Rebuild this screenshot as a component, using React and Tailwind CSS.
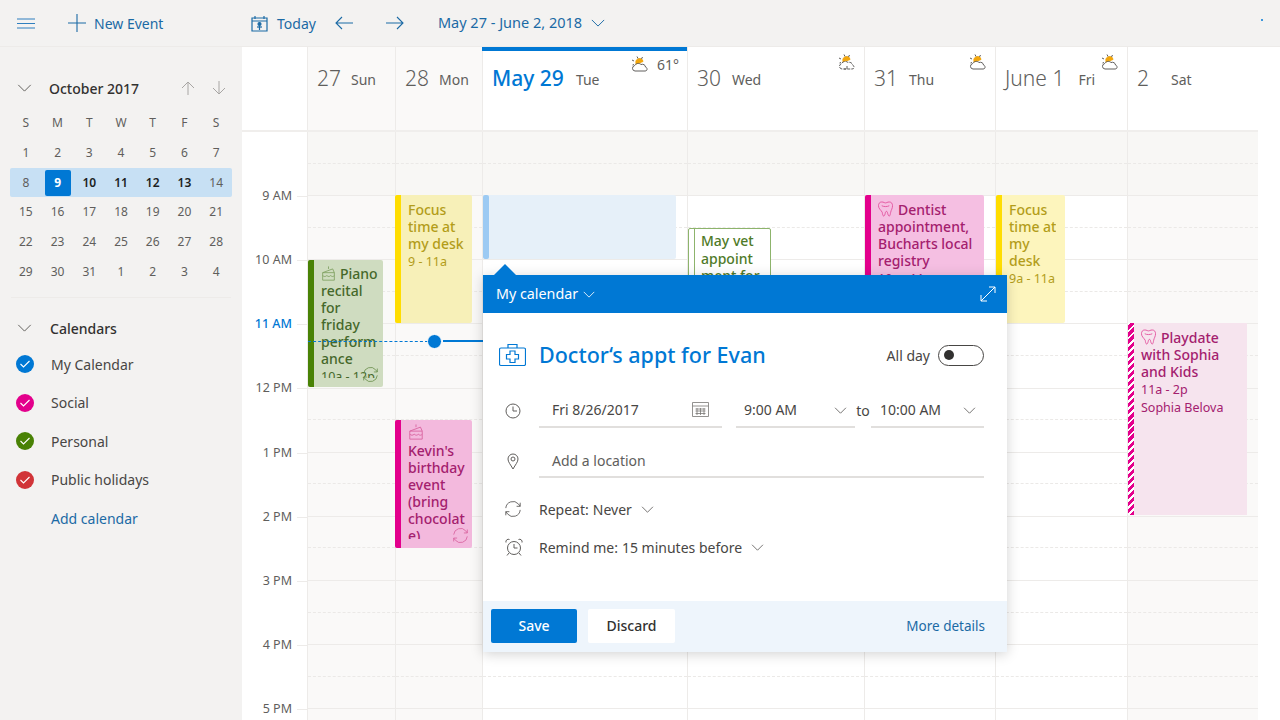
import React from 'react';

const Chevron = ({ className = '', color = '#605e5c' }) => (
  <svg viewBox="0 0 16 9" className={className} fill="none" stroke={color} strokeWidth="1.1">
    <path d="M1 1l7 7 7-7" />
  </svg>
);

const Sync = ({ className = '', color }) => (
  <svg viewBox="0 0 20 20" className={className} fill="none" stroke={color} strokeWidth="1">
    <path d="M2 9a8 8 0 0 1 14-4.6L18 7M18 3v4h-4" />
    <path d="M18 11a8 8 0 0 1-14 4.6L2 13M2 17v-4h4" />
  </svg>
);

const Cake = ({ className = '', color }) => (
  <svg viewBox="0 0 18 18" className={className} fill="none" stroke={color} strokeWidth="1">
    <path d="M9 .5v3M2 8l12-4.5 2 4.5M2 8h14v9H2zM2 11.5c2 1.5 3 1.5 5 0 2 1.5 3 1.5 4.500 0 2 1.500 3 1.500 4.500 0" />
  </svg>
);

const Tooth = ({ className = '', color }) => (
  <svg viewBox="0 0 16 17" className={className} fill="none" stroke={color} strokeWidth="1">
    <path d="M4 1c2 0 3 1 4 1s2-1 4-1c2.500 0 3.500 2 3.500 4 0 3-1.500 4.500-2 7-.3 1.500-.5 4-1.500 4s-1.500-2-2-4c-.3-1.300-1.500-1.300-2 0-.5 2-1 4-2 4s-1.200-2.500-1.500-4C3 9.500.5 8 .5 5 .5 3 1.500 1 4 1z" />
    <path d="M4 5c2 1.200 6 1.200 8 0" />
  </svg>
);

const Weather = ({ rain = false }) => (
  <svg viewBox="0 0 18 17" className="w-[18px] h-[17px]" fill="none" strokeWidth="1">
    <path d="M5 7a3.500 3.500 0 0 1 7-1.500L5 8z" fill="#f2a60c" stroke="#f2a60c" />
    <path d="M6 .5l1 2M1 4l2 1M11.500 1l-1 2M1.500 9L3 8.500" stroke="#605e5c" />
    <path d="M4 15a2.700 2.700 0 0 1-.5-5.300C4.500 7.500 8 6.500 10 8.500c2-.8 4.500.5 4.500 2.500 1.800.3 2.500 4-.5 4z" stroke="#605e5c" fill={rain ? '#ffffff' : 'none'} strokeDasharray={rain ? '3 1' : undefined} />
    {rain && <path d="M9 12v3M7 14v2" stroke="#605e5c" />}
  </svg>
);

const TopBar = () => (
  <div className="h-[47px] flex items-center border-b border-[#edebe9] relative text-[14px] text-[#1b6aa5]">
    <svg viewBox="0 0 18 11" className="w-[18px] h-[11px] ml-[17px]" stroke="#2f7fbf" strokeWidth="1">
      <path d="M0 1h18M0 5.500h18M0 10h18" />
    </svg>
    <svg viewBox="0 0 18 18" className="w-[18px] h-[18px] ml-[33px]" stroke="#1b6aa5" strokeWidth="1.100">
      <path d="M0 9h18M9 0v18" />
    </svg>
    <span className="ml-[8px] w-[157px] mt-[1px]">New Event</span>
    <svg viewBox="0 0 17 17" className="w-[17px] h-[17px]" fill="none" stroke="#1b6aa5" strokeWidth="1.200">
      <path d="M1 3h15v13H1zM1 6h15M4 1v3M13 1v3M8.500 11v4" />
      <circle cx="8.500" cy="9" r="1.500" fill="#1b6aa5" />
      <path d="M6 12h5" />
    </svg>
    <span className="ml-[9px] mt-[1px]">Today</span>
    <svg viewBox="0 0 18 14" className="w-[18px] h-[14px] ml-[19px]" fill="none" stroke="#1b6aa5" strokeWidth="1.100">
      <path d="M18 7H1M7 1L1 7l6 6" />
    </svg>
    <svg viewBox="0 0 18 14" className="w-[18px] h-[14px] ml-[33px]" fill="none" stroke="#1b6aa5" strokeWidth="1.100">
      <path d="M0 7h17M11 1l6 6-6 6" />
    </svg>
    <span className="ml-[34px] text-[14.500px]">May 27 - June 2, 2018</span>
    <Chevron className="w-[14px] h-[8px] ml-[9px]" color="#1b6aa5" />
    <div className="absolute right-[17px] top-[19px] w-[2px] h-[2px] rounded-full bg-[#0078d4]" />
  </div>
);

const weekdays = ['S', 'M', 'T', 'W', 'T', 'F', 'S'];
const weeks = [
  [1, 2, 3, 4, 5, 6, 7],
  [8, 9, 10, 11, 12, 13, 14],
  [15, 16, 17, 18, 19, 20, 21],
  [22, 23, 24, 25, 26, 27, 28],
  [29, 30, 31, 1, 2, 3, 4],
];

const calendars = [
  { name: 'My Calendar', color: 'bg-[#0078d4]' },
  { name: 'Social', color: 'bg-[#e3008c]' },
  { name: 'Personal', color: 'bg-[#498205]' },
  { name: 'Public holidays', color: 'bg-[#d13438]' },
];

const Sidebar = () => (
  <div className="w-[242px] shrink-0 pt-[31px]">
    <div className="flex items-center h-[20px]">
      <Chevron className="w-[15px] h-[8px] ml-[17px]" />
      <span className="ml-[17px] text-[14px] font-medium text-[#323130]">October 2017</span>
      <svg viewBox="0 0 14 14" className="w-[14px] h-[14px] absolute left-[181px]" fill="none" stroke="#a8a6a4">
        <path d="M7 14V1M1 7l6-6 6 6" />
      </svg>
      <svg viewBox="0 0 14 14" className="w-[14px] h-[14px] absolute left-[212px]" fill="none" stroke="#a8a6a4">
        <path d="M7 0v13M1 7l6 6 6-6" />
      </svg>
    </div>
    <div className="mt-[10px] mx-[10px] grid grid-cols-7 text-[12px] text-[#605e5c]">
      {weekdays.map((d, i) => (
        <div key={i} className="h-[30px] flex items-center justify-center">{d}</div>
      ))}
    </div>
    <div className="mx-[10px] text-[12px] text-[#605e5c]">
      {weeks.map((w, i) => (
        <div key={i} className={i === 1 ? 'grid grid-cols-7 h-[29px] bg-[#c7e0f4] rounded-[2px]' : 'grid grid-cols-7 h-[30px]'}>
          {w.map((d, j) => (
            <div key={j} className="flex items-center justify-center">
              {d === 9 && i === 1 ? (
                <span className="w-[26px] h-[26px] flex items-center justify-center rounded-[2px] bg-[#0078d4] text-white font-bold">{d}</span>
              ) : (
                <span className={i === 1 && j > 1 && j < 6 ? 'font-semibold text-[#201f1e]' : ''}>{d}</span>
              )}
            </div>
          ))}
        </div>
      ))}
    </div>
    <div className="mt-[10px] mx-[11px] h-px bg-[#edebe9]" />
    <div className="mt-[20px] flex items-center h-[20px]">
      <Chevron className="w-[15px] h-[8px] ml-[17px]" />
      <span className="ml-[18px] text-[14px] font-medium text-[#323130]">Calendars</span>
    </div>
    <div className="mt-[7px]">
      {calendars.map((c) => (
        <div key={c.name} className="h-[38.500px] flex items-center pl-[16px]">
          <span className={`w-[18px] h-[18px] rounded-full flex items-center justify-center ${c.color}`}>
            <svg viewBox="0 0 10 8" className="w-[10px] h-[8px]" fill="none" stroke="#ffffff" strokeWidth="1.100">
              <path d="M.5 4l3 3 6-6" />
            </svg>
          </span>
          <span className="ml-[17px] text-[14px] text-[#484644]">{c.name}</span>
        </div>
      ))}
      <div className="h-[38.500px] flex items-center pl-[51px] text-[14px] text-[#1b6aa5]">Add calendar</div>
    </div>
  </div>
);

const Event = ({ className, bar, lines, time, extra, textColor, indent = '', innerClass = 'pt-[6px]', children }) => (
  <div className={`absolute flex rounded-[2px] overflow-hidden ${className}`}>
    <div className={`w-[6px] shrink-0 ${bar}`} />
    <div className={`pl-[7px] text-[14px] leading-[17px] font-medium overflow-hidden ${textColor} ${innerClass}`}>
      {children}
      {lines.map((l, i) => (
        <div key={i} className={`whitespace-nowrap ${i === 0 ? indent : ''}`}>{l}</div>
      ))}
      {time && <div className="text-[12.500px] font-normal whitespace-nowrap mt-[1px]">{time}</div>}
      {extra && <div className="text-[12.500px] font-normal whitespace-nowrap mt-[1px]">{extra}</div>}
    </div>
  </div>
);

const Slots = () => (
  <>
    {Array.from({ length: 10 }).map((_, i) => (
      <div key={i} className={`h-[64.150px] border-b border-[#edebe9] ${i === 0 ? 'bg-[#f8f7f5]' : ''}`}>
        <div className="h-1/2 border-b border-dashed border-[#ebe9e7]" />
      </div>
    ))}
  </>
);

const hours = ['9 AM', '10 AM', '11 AM', '12 PM', '1 PM', '2 PM', '3 PM', '4 PM', '5 PM'];

const Header = ({ width, label, day, gap, today, weather, temp, rain, weekend }) => (
  <div className={`${width} shrink-0 h-[83px] relative border-l border-[#edebe9] flex items-baseline pt-[16px] pl-[9px] ${weekend ? 'bg-[#faf9f8]' : 'bg-white'} ${gap}`}>
    {today && <div className="absolute -left-px right-0 top-0 h-[4px] bg-[#0078d4]" />}
    <span className={today ? 'text-[21px] font-medium text-[#0078d4]' : 'text-[21px] font-light text-[#605e5c]'}>{label}</span>
    <span className="text-[14px] text-[#605e5c] relative -top-[1px]">{day}</span>
    {weather && (
      <div className="absolute right-[8px] top-[7px] flex items-center gap-[8px]">
        <Weather rain={rain} />
        {temp && <span className="text-[14px] text-[#605e5c]">{temp}</span>}
      </div>
    )}
  </div>
);

const Field = ({ className, children }) => (
  <div className={`h-[35px] border-b-2 border-[#e1dfdd] flex items-center shrink-0 ${className}`}>{children}</div>
);

const Popup = () => (
  <div className="absolute left-[241px] top-[228px] w-[524px] h-[377px] bg-white z-20 flex flex-col shadow-[0_2px_12px_rgba(0,0,0,0.18)]">
    <div className="absolute left-[11px] -top-[11px] w-0 h-0 border-x-[11px] border-x-transparent border-b-[11px] border-b-[#0078d4]" />
    <div className="h-[38px] bg-[#0078d4] flex items-center pl-[13px] pr-[11px] text-white shrink-0">
      <span className="text-[14.300px]">My calendar</span>
      <Chevron className="w-[12px] h-[7px] ml-[5px]" color="#ffffff" />
      <svg viewBox="0 0 16 16" className="w-[16px] h-[16px] ml-auto" fill="none" stroke="#ffffff">
        <path d="M1 15L15 1M9 1h6v6M1 9v6h6" />
      </svg>
    </div>
    <div className="mt-[28px] h-[28px] flex items-center pl-[16px] pr-[23px]">
      <svg viewBox="0 0 27 24" className="w-[27px] h-[24px] shrink-0" fill="none" stroke="#0078d4" strokeWidth="1.200">
        <path d="M2 5h23a1.500 1.500 0 0 1 1.500 1.500V21a1.500 1.500 0 0 1-1.500 1.500H2A1.500 1.500 0 0 1 .5 21V6.500A1.500 1.500 0 0 1 2 5zM9 5V1.500h9V5" />
        <path d="M11 8h5v3.500h3.500v4.500H16v3.500h-5V16H7.500v-4.500H11z" />
      </svg>
      <span className="ml-[13px] text-[21.500px] font-medium text-[#0078d4]">Doctor‘s appt for Evan</span>
      <span className="ml-auto text-[14px] text-[#484644]">All day</span>
      <span className="ml-[8px] w-[46px] h-[21px] rounded-full border border-[#484644] flex items-center pl-[5px]">
        <span className="w-[10px] h-[10px] rounded-full bg-[#323130]" />
      </span>
    </div>
    <div className="mt-[24px] flex items-center pl-[22px] text-[14px] text-[#484644]">
      <svg viewBox="0 0 16 16" className="w-[16px] h-[16px] mr-[18px]" fill="none" stroke="#605e5c">
        <circle cx="8" cy="8" r="7" />
        <path d="M8 3.500V8h4" />
      </svg>
      <Field className="w-[183px] pl-[13px] relative">
        Fri 8/26/2017
        <svg viewBox="0 0 17 16" className="w-[17px] h-[16px] absolute left-[153px] top-[8px]" fill="none" stroke="#797775">
          <path d="M.5 1.500h16v14H.5zM.5 5h16M3.500 8h10M3.500 10h10M3.500 12.500h10M5 7v7M8.500 7v7M12 7v7" strokeWidth=".8" />
        </svg>
      </Field>
      <Field className="w-[119px] ml-[14px] pl-[8px] relative">
        9:00 AM
        <Chevron className="w-[13px] h-[7px] absolute right-[8px] top-[14px]" />
      </Field>
      <span className="w-[16px] text-center">to</span>
      <Field className="w-[113px] pl-[9px] relative">
        10:00 AM
        <Chevron className="w-[13px] h-[7px] absolute right-[8px] top-[14px]" />
      </Field>
    </div>
    <div className="mt-[16px] flex items-center pl-[24px] text-[14px] text-[#605e5c]">
      <svg viewBox="0 0 12 17" className="w-[12px] h-[17px] mr-[20px]" fill="none" stroke="#605e5c">
        <path d="M6 16C3.500 11.500 1 9 1 6a5 5 0 0 1 10 0c0 3-2.500 5.500-5 10z" />
        <circle cx="6" cy="6" r="2" />
      </svg>
      <Field className="w-[445px] pl-[13px] !h-[34px]">Add a location</Field>
    </div>
    <div className="mt-[19px] h-[24px] flex items-center pl-[21px] text-[14px] text-[#484644]">
      <Sync className="w-[18px] h-[18px] mr-[17px]" color="#605e5c" />
      <span>Repeat:</span>
      <span className="ml-[4px]">Never</span>
      <Chevron className="w-[13px] h-[7px] ml-[9px]" />
    </div>
    <div className="mt-[14px] h-[24px] flex items-center pl-[22px] text-[14px] text-[#484644]">
      <svg viewBox="0 0 18 18" className="w-[18px] h-[18px] mr-[16px]" fill="none" stroke="#605e5c">
        <circle cx="9" cy="10" r="6.500" />
        <path d="M9 6v4h3.500M1 4.500a2.500 2.500 0 0 1 3.500-3M17 4.500a2.500 2.500 0 0 0-3.500-3M4 15l-2 2.500M14 15l2 2.500" />
      </svg>
      <span>Remind me:</span>
      <span className="ml-[4px]">15 minutes before</span>
      <Chevron className="w-[13px] h-[7px] ml-[9px]" />
    </div>
    <div className="mt-auto h-[51px] bg-[#eef5fc] flex items-center pl-[8px] pr-[22px] pb-[2px] shrink-0">
      <button className="w-[86px] h-[34px] bg-[#0078d4] rounded-[2px] text-[14px] font-medium text-white">Save</button>
      <button className="ml-[11px] w-[87px] h-[34px] bg-white rounded-[2px] text-[14px] font-medium text-[#323130]">Discard</button>
      <span className="ml-auto mt-[2px] text-[13.500px] text-[#1b6aa5]">More details</span>
    </div>
  </div>
);

const Main = () => (
  <div className="flex-1 relative bg-white overflow-hidden">
    <div className="flex w-[1016px] border-b-2 border-[#f0eeec] h-[85px]">
      <div className="w-[65px] shrink-0" />
      <Header width="w-[88px]" label="27" day="Sun" gap="gap-[10px]" weekend />
      <Header width="w-[87px]" label="28" day="Mon" gap="gap-[10px]" weekend />
      <Header width="w-[205px]" label="May 29" day="Tue" gap="gap-[12px]" today weather temp="61°" />
      <Header width="w-[177px]" label="30" day="Wed" gap="gap-[11px]" weather rain />
      <Header width="w-[131px]" label="31" day="Thu" gap="gap-[11px]" weather />
      <Header width="w-[132px]" label="June 1" day="Fri" gap="gap-[14px]" weather />
      <Header width="w-[131px]" label="2" day="Sat" gap="gap-[22px]" />
    </div>
    <div className="flex h-[588px]">
      <div className="w-[65px] shrink-0 pt-[64px]">
        {hours.map((h) => (
          <div key={h} className="h-[64.150px] flex items-start">
            <span className={`w-[50px] text-right -mt-[9px] text-[12.500px] ${h === '11 AM' ? 'text-[#0078d4] font-medium' : 'text-[#605e5c]'}`}>{h}</span>
            <span className="ml-[5px] w-[10px] h-px bg-[#edebe9]" />
          </div>
        ))}
      </div>
      <div className="w-[88px] shrink-0 relative border-l border-[#edebe9] bg-[#faf9f8]">
        <Slots />
        <Event
          className="left-0 top-[128px] w-[75px] h-[127px] bg-[#cfdcc0]"
          bar="bg-[#498205]"
          textColor="text-[#45682a]"
          indent="indent-[19px]"
          innerClass="pt-[5px] h-[118px]"
          lines={['Piano', 'recital', 'for', 'friday', 'perform', 'ance']}
          time="10a - 12p"
        >
          <Cake className="absolute left-[13px] top-[6px] w-[15px] h-[15px]" color="#7d9f5e" />
        </Event>
        <Sync className="absolute left-[54px] top-[234px] w-[17px] h-[17px]" color="#6e9150" />
      </div>
      <div className="w-[87px] shrink-0 relative border-l border-[#edebe9] bg-[#faf9f8]">
        <Slots />
        <Event
          className="-left-px top-[63px] w-[77px] h-[128px] bg-[#f7f0b8]"
          bar="bg-[#ffdd00]"
          textColor="text-[#b39d1a]"
          lines={['Focus', 'time at', 'my desk']}
          time="9 - 11a"
        />
        <Event
          className="-left-px top-[288px] w-[77px] h-[128px] bg-[#f3b9dd]"
          bar="bg-[#e3008c]"
          textColor="text-[#a4206e]"
          innerClass="pt-[6px] h-[119px]"
          lines={['Kevin\'s', 'birthday', 'event', '(bring', 'chocolat', 'e)']}
        >
          <div className="h-[16px] -mt-[2px] mb-[2px]">
            <Cake className="w-[16px] h-[16px]" color="#d9639f" />
          </div>
        </Event>
        <Sync className="absolute left-[56px] top-[395px] w-[17px] h-[17px]" color="#d9639f" />
      </div>
      <div className="w-[205px] shrink-0 relative border-l border-[#edebe9]">
        <Slots />
        <div className="absolute left-0 top-[63px] w-[193px] h-[64px] bg-[#e6f0f9] rounded-[2px]">
          <div className="w-[6px] h-full bg-[#9ccaf3] rounded-[2px]" />
        </div>
      </div>
      <div className="w-[177px] shrink-0 relative border-l border-[#edebe9]">
        <Slots />
        <div className="absolute left-0 top-[96px] w-[83px] h-[96px] bg-white border border-[#8db46c] flex rounded-[2px]">
          <div className="w-[6px] shrink-0 border-r border-[#8db46c]" />
          <div className="pl-[6px] pt-[3px] text-[14px] leading-[17.500px] font-medium text-[#4f7a28] whitespace-nowrap">
            <div>May vet</div>
            <div>appoint</div>
            <div>ment for</div>
          </div>
        </div>
      </div>
      <div className="w-[131px] shrink-0 relative border-l border-[#edebe9]">
        <Slots />
        <Event
          className="left-0 top-[63px] w-[119px] h-[128px] bg-[#f5bfe2]"
          bar="bg-[#e3008c]"
          textColor="text-[#a4206e]"
          indent="indent-[20px]"
          lines={['Dentist', 'appointment,', 'Bucharts local', 'registry']}
          time="10a - 11a"
        >
          <Tooth className="absolute left-[13px] top-[6px] w-[15px] h-[16px]" color="#e3559f" />
        </Event>
      </div>
      <div className="w-[132px] shrink-0 relative border-l border-[#edebe9]">
        <Slots />
        <Event
          className="left-0 top-[63px] w-[69px] h-[128px] bg-[#fdf5bd]"
          bar="bg-[#ffdd00]"
          textColor="text-[#b39d1a]"
          lines={['Focus', 'time at', 'my', 'desk']}
          time="9a - 11a"
        />
      </div>
      <div className="w-[131px] shrink-0 relative border-l border-[#edebe9] bg-[#faf9f8]">
        <Slots />
        <Event
          className="left-0 top-[191px] w-[119px] h-[192px] bg-[#f6e4ee] !rounded-none"
          bar="bg-[repeating-linear-gradient(-45deg,#e3008c,#e3008c_3px,#ffffff_3px,#ffffff_5px)]"
          textColor="text-[#a4206e]"
          indent="indent-[20px]"
          lines={['Playdate', 'with Sophia', 'and Kids']}
          time="11a - 2p"
          extra="Sophia Belova"
        >
          <Tooth className="absolute left-[13px] top-[6px] w-[15px] h-[16px]" color="#e3559f" />
        </Event>
      </div>
    </div>
    <div className="absolute left-[66px] top-[294px] w-[120px] border-t border-dashed border-[#0078d4] z-10" />
    <div className="absolute left-[185px] top-[287px] w-[15px] h-[15px] rounded-full bg-[#0078d4] border border-white z-10" />
    <div className="absolute left-[201px] top-[293px] w-[45px] h-[2px] bg-[#0078d4] z-10" />
    <Popup />
  </div>
);

export default function App() {
  return (
    <div className="w-[1280px] h-[720px] overflow-hidden bg-[#f3f2f1] flex flex-col relative font-['Noto_Sans',sans-serif]">
      <TopBar />
      <div className="flex flex-1 min-h-0">
        <Sidebar />
        <Main />
      </div>
    </div>
  );
}
